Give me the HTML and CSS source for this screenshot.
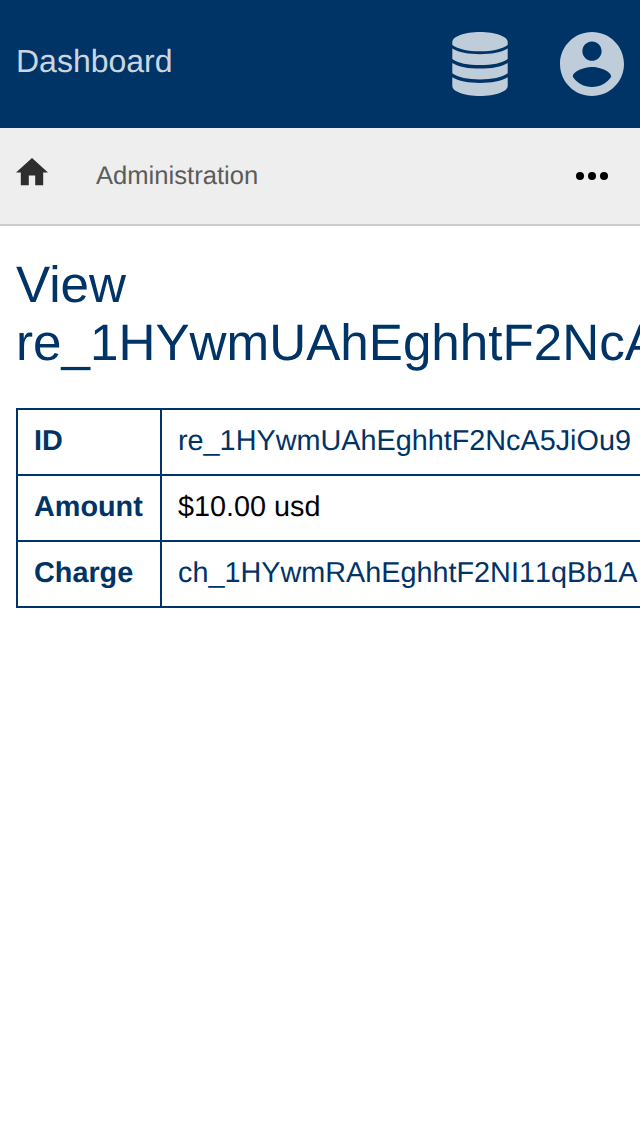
FILE: index.html
```html
<!DOCTYPE html>
<html lang="en">
<head>
<meta charset="utf-8">
<title>Dashboard</title>
<link rel="stylesheet" href="styles.css">
</head>
<body>
<header class="topbar">
  <a class="brand">Dashboard</a>
  <nav class="tools">
    <svg class="icon-database" viewBox="0 0 56 64" aria-label="Data">
      <path d="M.300 10C.300 4.500 12.500 0 28 0s27.700 4.500 27.700 10v2.900C50 17 40 19.200 28 19.200S6 17 .300 12.900z"/>
      <path d="M.300 16.500C6 20.300 17 22.200 28 22.200s22-1.900 27.700-5.700v10.400C50 31 40 33.100 28 33.100S6 31 .300 26.900z"/>
      <path d="M.300 30.900C6 34.700 17 36.600 28 36.600s22-1.900 27.700-5.700v10.400C50 45.400 40 47.500 28 47.500S6 45.400 .300 41.300z"/>
      <path d="M.300 45.300C6 49.100 17 51 28 51s22-1.900 27.700-5.700V54c0 5.500-12.200 10-27.700 10S.300 59.500 .300 54z"/>
    </svg>
    <svg class="icon-account" viewBox="2 2 20 20" aria-label="Account">
      <path d="M12 2C6.480 2 2 6.480 2 12s4.480 10 10 10 10-4.480 10-10S17.520 2 12 2zm0 3c1.660 0 3 1.340 3 3s-1.340 3-3 3-3-1.340-3-3 1.340-3 3-3zm0 14.200c-2.500 0-4.710-1.280-6-3.220.030-1.990 4-3.080 6-3.080 1.990 0 5.970 1.090 6 3.080-1.290 1.940-3.500 3.220-6 3.220z"/>
    </svg>
  </nav>
</header>
<nav class="crumbs">
  <svg class="icon-home" viewBox="2 3 20 17" aria-label="Home"><path d="M10 20v-6h4v6h5v-8h3L12 3 2 12h3v8z"/></svg>
  <a class="crumb">Administration</a>
  <svg class="icon-more" viewBox="0 0 32 8" aria-label="More"><circle cx="4" cy="4" r="4"/><circle cx="16" cy="4" r="4"/><circle cx="28" cy="4" r="4"/></svg>
</nav>
<main class="content">
  <h1 class="title">View re_1HYwmUAhEghhtF2NcA5JiOu9</h1>
  <table class="details">
    <tr><th>ID</th><td><a class="link">re_1HYwmUAhEghhtF2NcA5JiOu9</a></td></tr>
    <tr><th>Amount</th><td>$10.00 usd</td></tr>
    <tr><th>Charge</th><td><a class="link">ch_1HYwmRAhEghhtF2NI11qBb1A</a></td></tr>
  </table>
</main>
</body>
</html>
```

FILE: styles.css
```css
* { box-sizing: border-box; }
body {
  margin: 0;
  min-height: 1136px;
  overflow: hidden;
  background: #fff;
  color: #000;
  font-family: "Liberation Sans", Arial, sans-serif;
  text-rendering: geometricPrecision;
}
.topbar {
  display: flex;
  justify-content: space-between;
  align-items: center;
  height: 128px;
  padding: 0 16px;
  background: #003366;
}
.brand {
  padding-bottom: 6px;
  color: #ccd6e0;
  font-size: 32px;
  line-height: 36px;
}
.tools { display: flex; gap: 52px; fill: #bfccd9; }
.icon-database { width: 56px; height: 64px; }
.icon-account { width: 64px; height: 64px; }
.crumbs {
  display: flex;
  align-items: center;
  height: 98px;
  padding: 0 32px 0 16px;
  background: #eee;
  border-bottom: 2px solid #ccc;
}
.icon-home { width: 32px; height: 27.2px; margin: 0 48px 8px 0; fill: #2e2e2e; }
.crumb { color: #5b5b5b; font-size: 25.6px; line-height: 30px; }
.icon-more { width: 32px; height: 8px; margin-left: auto; }
.content { padding: 30px 16px 0; }
.title {
  margin: 0 0 36px;
  color: #003366;
  font-size: 51.2px;
  font-weight: 400;
  line-height: 58px;
}
.details {
  border-collapse: collapse;
  color: #000;
  font-size: 28.8px;
  line-height: 32px;
  white-space: nowrap;
}
.details th,
.details td {
  height: 66px;
  padding: 0 16px 2px;
  border: 2px solid #003366;
  text-align: left;
}
.details th { min-width: 144px; width: 144px; padding-right: 17px; color: #003366; }
.details td { font-kerning: none; }
.link { color: #003366; }
```
